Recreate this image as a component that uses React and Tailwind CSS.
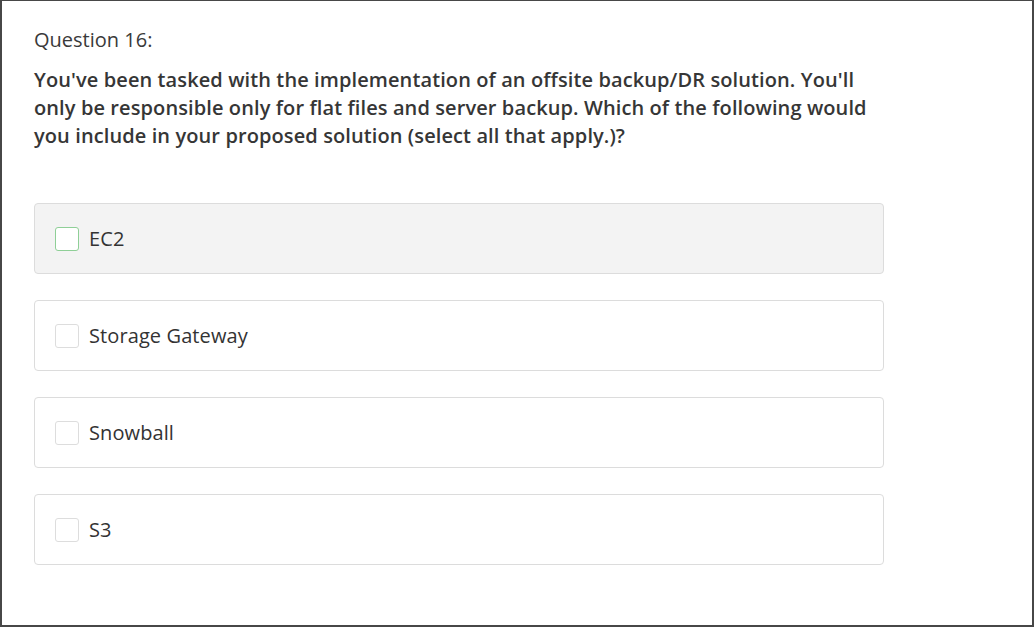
import React from "react";

const options = ["EC2", "Storage Gateway", "Snowball", "S3"];

export default function App() {
  return (
    <div
      className="w-[1034px] h-[627px] bg-white border-t border-l-2 border-r-2 border-b-2 border-[#474747] text-[#333333] overflow-hidden"
      style={{ fontFamily: '"Open Sans", "Noto Sans", sans-serif' }}
    >
      <div className="pl-[32px] pt-[25px] w-[882px]">
        <div className="text-[20px] leading-[28px] text-[#3a3a3a]">Question 16:</div>
        <div className="mt-[12px] text-[20px] leading-[28px] font-semibold tracking-[0.1px] text-[#363636]">
          You've been tasked with the implementation of an offsite backup/DR solution. You'll
          <br />
          only be responsible only for flat files and server backup. Which of the following would
          <br />
          you include in your proposed solution (select all that apply.)?
        </div>
        <div className="mt-[53px] flex flex-col gap-[26px]">
          {options.map((o, i) => (
            <div
              key={o}
              className={`h-[71px] rounded-[4px] border border-[#dcdcdc] flex items-center pl-[20px] ${
                i === 0 ? "bg-[#f3f3f3]" : "bg-white"
              }`}
            >
              <div
                className={`w-[24px] h-[24px] rounded-[3px] bg-white border ${
                  i === 0 ? "border-[#8fcf97]" : "border-[#dddddd]"
                }`}
              />
              <span className="ml-[10px] text-[20px] leading-[28px] tracking-[0.1px] text-[#333333]">{o}</span>
            </div>
          ))}
        </div>
      </div>
    </div>
  );
}
